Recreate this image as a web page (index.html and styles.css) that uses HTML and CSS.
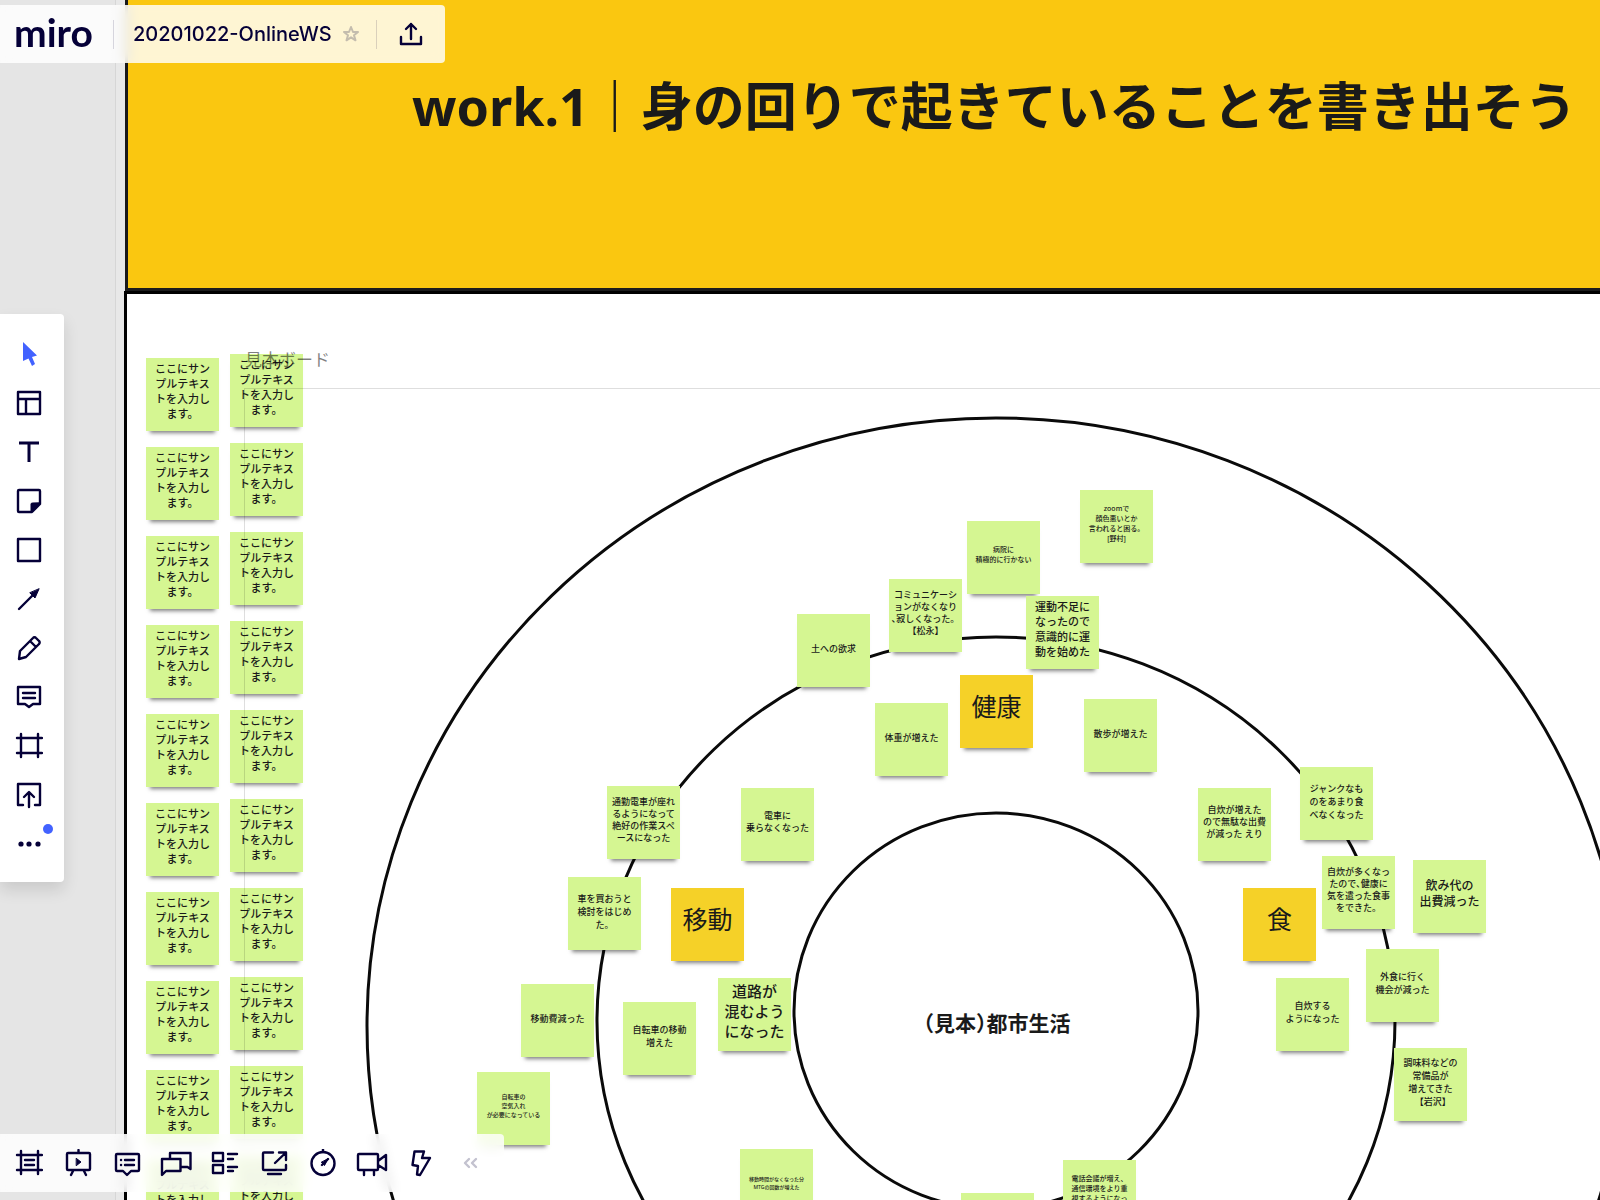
FILE: index.html
```html
<!DOCTYPE html>
<html lang="ja">
<head>
<meta charset="utf-8">
<meta name="viewport" content="width=device-width, initial-scale=1">
<title>20201022-OnlineWS</title>
<link rel="stylesheet" href="styles.css">
</head>
<body>
<main class="board">
  <div class="sheet">
    <section class="banner">
      <h1 class="banner-title">work.1｜身の回りで起きていることを書き出そう</h1>
    </section>
    <section class="workspace">
      <ul class="stack stack-low">
        <li class="note">ここにサン<br>プルテキス<br>トを入力し<br>ます。</li>
        <li class="note">ここにサン<br>プルテキス<br>トを入力し<br>ます。</li>
        <li class="note">ここにサン<br>プルテキス<br>トを入力し<br>ます。</li>
        <li class="note">ここにサン<br>プルテキス<br>トを入力し<br>ます。</li>
        <li class="note">ここにサン<br>プルテキス<br>トを入力し<br>ます。</li>
        <li class="note">ここにサン<br>プルテキス<br>トを入力し<br>ます。</li>
        <li class="note">ここにサン<br>プルテキス<br>トを入力し<br>ます。</li>
        <li class="note">ここにサン<br>プルテキス<br>トを入力し<br>ます。</li>
        <li class="note">ここにサン<br>プルテキス<br>トを入力し<br>ます。</li>
        <li class="note">ここにサン<br>プルテキス<br>トを入力し<br>ます。</li>
      </ul>
      <ul class="stack stack-high">
        <li class="note">ここにサン<br>プルテキス<br>トを入力し<br>ます。</li>
        <li class="note">ここにサン<br>プルテキス<br>トを入力し<br>ます。</li>
        <li class="note">ここにサン<br>プルテキス<br>トを入力し<br>ます。</li>
        <li class="note">ここにサン<br>プルテキス<br>トを入力し<br>ます。</li>
        <li class="note">ここにサン<br>プルテキス<br>トを入力し<br>ます。</li>
        <li class="note">ここにサン<br>プルテキス<br>トを入力し<br>ます。</li>
        <li class="note">ここにサン<br>プルテキス<br>トを入力し<br>ます。</li>
        <li class="note">ここにサン<br>プルテキス<br>トを入力し<br>ます。</li>
        <li class="note">ここにサン<br>プルテキス<br>トを入力し<br>ます。</li>
        <li class="note">ここにサン<br>プルテキス<br>トを入力し<br>ます。</li>
      </ul>

      <div class="frame">
        <h2 class="frame-name">見本ボード</h2>
        <svg class="rings" viewBox="0 0 1400 1260" aria-hidden="true">
          <ellipse cx="751" cy="637" rx="629" ry="608"/>
          <ellipse cx="751" cy="632" rx="399" ry="384"/>
          <ellipse cx="751" cy="622" rx="202" ry="198"/>
        </svg>
        <p class="core">（見本）都市生活</p>

        <div class="note pinned at-zoom t7">zoomで<br>顔色悪いとか<br>言われると困る。<br>[野村]</div>
        <div class="note pinned at-hospital t7">病院に<br>積極的に行かない</div>
        <div class="note pinned at-talk t9 tight">コミュニケーシ<br>ョンがなくなり<br>､寂しくなった。<br>【松永】</div>
        <div class="note pinned at-exercise">運動不足に<br>なったので<br>意識的に運<br>動を始めた</div>
        <div class="note pinned at-soil t9">土への欲求</div>
        <div class="note pinned at-health topic">健康</div>
        <div class="note pinned at-weight t9">体重が増えた</div>
        <div class="note pinned at-walk t9">散歩が増えた</div>
        <div class="note pinned at-commute t9 tight">通勤電車が座れ<br>るようになって<br>絶好の作業スペ<br>ースになった</div>
        <div class="note pinned at-train t9 tight">電車に<br>乗らなくなった</div>
        <div class="note pinned at-car t9">車を買おうと<br>検討をはじめ<br>た。</div>
        <div class="note pinned at-move topic">移動</div>
        <div class="note pinned at-fare t9">移動費減った</div>
        <div class="note pinned at-bike t9">自転車の移動<br>増えた</div>
        <div class="note pinned at-road t15">道路が<br>混むよう<br>になった</div>
        <div class="note pinned at-air t6">自転車の<br>空気入れ<br>が必要になっている</div>
        <div class="note pinned at-cook t9 tight">自炊が増えた<br>ので無駄な出費<br>が減った えり</div>
        <div class="note pinned at-junk t9">ジャンクなも<br>のをあまり食<br>べなくなった</div>
        <div class="note pinned at-meals t9 tight">自炊が多くなっ<br>たので､健康に<br>気を遣った食事<br>をできた。</div>
        <div class="note pinned at-drink t12">飲み代の<br>出費減った</div>
        <div class="note pinned at-food topic">食</div>
        <div class="note pinned at-eatout t9">外食に行く<br>機会が減った</div>
        <div class="note pinned at-self t9">自炊する<br>ようになった</div>
        <div class="note pinned at-season t9">調味料などの<br>常備品が<br>増えてきた<br>　【岩沢】</div>
        <div class="note pinned at-mtg t5">移動時間がなくなった分<br>MTGの回数が増えた</div>
        <div class="note pinned at-call t7">電話会議が増え、<br>通信環境をより重<br>視するようになっ<br>た。</div>
        <div class="note pinned at-blank"></div>
      </div>
    </section>
  </div>
</main>

<header class="panel topbar">
  <a class="logo" href="#">miro</a>
  <span class="rule"></span>
  <button class="board-name" type="button">20201022-OnlineWS</button>
  <button class="star" type="button" aria-label="お気に入り">
    <svg width="18" height="18" viewBox="0 0 18 18"><path d="M9 2l2 5h5l-4 3.300 1.500 5L9 12.300 4.500 15.300l1.500-5L2 7h5z"/></svg>
  </button>
  <span class="rule"></span>
  <button class="share" type="button" aria-label="エクスポート">
    <svg width="24" height="24" viewBox="0 0 24 24"><path d="M2 15v7h20v-7M12 17V2M7 7l5-5 5 5"/></svg>
  </button>
</header>

<nav class="tools" aria-label="ツール">
  <button type="button" aria-label="選択"><svg class="select" viewBox="0 0 28 28"><path d="M8 2l14 13.500-5 1.500 3 7-3 2-3.500-7.500L8 21z"/></svg></button>
  <button type="button" aria-label="テンプレート"><svg viewBox="0 0 28 28"><path d="M3 3h22v22H3zM3 10h22M11 10v15"/></svg></button>
  <button type="button" aria-label="テキスト"><svg viewBox="0 0 28 28"><path class="thick" d="M4 5h20M14 5v19"/></svg></button>
  <button type="button" aria-label="付箋"><svg viewBox="0 0 28 28"><path d="M4 3h20a1 1 0 0 1 1 1v13l-8 8H4a1 1 0 0 1-1-1V4a1 1 0 0 1 1-1z"/><path class="solid" d="M25 16l-9 9v-8a1 1 0 0 1 1-1z"/></svg></button>
  <button type="button" aria-label="図形"><svg viewBox="0 0 28 28"><path d="M3 3h22v22H3z"/></svg></button>
  <button type="button" aria-label="線"><svg viewBox="0 0 28 28"><path d="M4 24L20 8"/><path class="solid" d="M24 4l-4 9-5-5z"/></svg></button>
  <button type="button" aria-label="ペン"><svg viewBox="0 0 28 28"><path d="M4 25l1-8L18 4a2 2 0 0 1 3 0l3 3a2 2 0 0 1 0 3L11 23zM15 7l6 6"/></svg></button>
  <button type="button" aria-label="コメント"><svg viewBox="0 0 28 28"><path d="M3 4h22v17h-7l-4 3-4-3H3zM8 10h12M8 15h12"/></svg></button>
  <button type="button" aria-label="フレーム"><svg viewBox="0 0 28 28"><path d="M2 6h25M2 21h25M6 2v23M23 2v23"/></svg></button>
  <button type="button" aria-label="アップロード"><svg viewBox="0 0 28 28"><path d="M8 24H3V3h22v21h-5M14 26V12M9 16l5-5 5 5"/></svg></button>
  <button class="more" type="button" aria-label="その他"><svg viewBox="0 0 28 28"><g class="dots"><circle cx="6" cy="14" r="2.600"/><circle cx="14" cy="14" r="2.600"/><circle cx="23" cy="14" r="2.600"/></g></svg><span class="badge"></span></button>
</nav>

<footer class="panel dock">
  <button type="button" aria-label="フレーム一覧"><svg viewBox="0 0 28 28"><path d="M2 6h25M2 21h25M6 2v23M23 2v23M10 11h9M10 16h9"/></svg></button>
  <button type="button" aria-label="プレゼン"><svg viewBox="0 0 28 28"><path d="M4 4h21a1 1 0 0 1 1 1v15a1 1 0 0 1-1 1H4a1 1 0 0 1-1-1V5a1 1 0 0 1 1-1zM14.500 1v3M9 22l-2 4M20 22l2 4"/><path class="solid" d="M12.500 9.500l4.500 3.500-4.500 3.500z"/></svg></button>
  <button type="button" aria-label="コメント一覧"><svg viewBox="0 0 28 28"><path d="M4 5h21a1 1 0 0 1 1 1v15a1 1 0 0 1-1 1h-7l-4 4-4-4H4a1 1 0 0 1-1-1V6a1 1 0 0 1 1-1zM8 11h.1M12 11h9M8 16h.1M12 16h9"/></svg></button>
  <button type="button" aria-label="チャット"><svg class="wide" viewBox="0 0 32 28"><path d="M2 26V10h18.500v12H6zM10 10V4h20.500v16l-3-2h-7"/></svg></button>
  <button type="button" aria-label="カード"><svg viewBox="0 0 28 28"><path d="M2 4h10v8H2zM2 16h10v8H2zM17 5h9M17 10h5M17 18h9M17 22h5"/></svg></button>
  <button type="button" aria-label="画面共有"><svg viewBox="0 0 28 28"><path d="M13 3.500H4a1 1 0 0 0-1 1V20a1 1 0 0 0 1 1h21a1 1 0 0 0 1-1v-4M15 14L26 3.500M19 3.500h7V11M8 25h13"/></svg></button>
  <button type="button" aria-label="タイマー"><svg viewBox="0 0 28 28"><circle cx="14" cy="14.500" r="11.500"/><path d="M14 0v3M13 16l6-6"/><path class="solid" d="M19 10l-3.500 6.500-3-3z"/></svg></button>
  <button type="button" aria-label="ビデオ"><svg class="wide" viewBox="0 0 32 28"><path d="M3 5h18a1 1 0 0 1 1 1v14a1 1 0 0 1-1 1H3a1 1 0 0 1-1-1V6a1 1 0 0 1 1-1zM22 12l8-6v15l-8-5M8 22v4M18 22v4"/></svg></button>
  <button type="button" aria-label="アクティビティ"><svg viewBox="0 0 28 28"><path d="M7.500 2.500H17L15 9h8L13 26l-3-.500 1-8.500-5.500-1z"/></svg></button>
  <button class="fold" type="button" aria-label="たたむ"><svg viewBox="0 0 28 28"><path d="M13 10l-4 4 4 4M20 10l-4 4 4 4"/></svg></button>
</footer>
</body>
</html>
```
FILE: styles.css
```css
* {
  box-sizing: border-box;
}

body {
  margin: 0;
  height: 100vh;
  overflow: hidden;
  position: relative;
  color: #1a1a1a;
  font-family: "Noto Sans", "Noto Sans CJK JP", sans-serif;
}

h1, h2, p, ul {
  margin: 0;
  padding: 0;
}

button {
  padding: 0;
  border: 0;
  background: none;
  font: inherit;
  color: inherit;
}

/* Canvas */

.board {
  display: flex;
  height: 100%;
  overflow: hidden;
  padding-left: 115px;
  background: #e5e5e5;
}

.sheet {
  flex: 1;
  min-width: 0;
  display: flex;
  flex-direction: column;
  padding-left: 8px;
  border-left: 1px solid #d6d6d6;
  background: #e8e8e8;
}

.banner {
  flex: none;
  margin-left: 1px;
  padding: 67px 0 144px 284px;
  border-left: 3px solid #1a1a1a;
  border-bottom: 3px solid #1c1c1c;
  background: #fac710;
}

.banner-title {
  font-size: 52px;
  font-weight: 700;
  line-height: 77px;
  white-space: nowrap;
}

.workspace {
  flex: 1;
  min-height: 0;
  position: relative;
  display: flex;
  gap: 11px;
  padding-left: 19px;
  border: solid #000;
  border-width: 3px 0 0 3px;
  background: #fff;
}

.stack {
  display: flex;
  flex-direction: column;
  gap: 16px;
  list-style: none;
}

.stack-low {
  padding-top: 64px;
}

.stack-high {
  padding-top: 60px;
}

/* Sticky notes */

.note {
  flex: none;
  display: grid;
  place-content: center;
  width: 73px;
  height: 73px;
  padding-bottom: 8px;
  background: #d5f692;
  box-shadow: 0 6px 4px -4px rgba(0, 0, 0, 0.5);
  font-size: 11px;
  font-weight: 500;
  line-height: 15px;
  text-align: center;
  white-space: nowrap;
}

.t5 { font-size: 5px; line-height: 8px; }
.t6 { font-size: 6px; line-height: 9px; }
.t7 { font-size: 7px; line-height: 10px; }
.t9 { font-size: 9px; line-height: 13px; }
.t12 { font-size: 12px; line-height: 16px; }
.t15 { font-size: 15px; line-height: 20px; }
.tight { line-height: 12px; }

.t5, .t6, .t7, .t9, .t12 {
  padding-bottom: 5px;
}

.topic {
  padding-bottom: 12px;
  background: #f5d128;
  font-size: 25px;
  font-weight: 400;
  line-height: 36px;
}

/* Sample frame */

.frame {
  position: absolute;
  inset: 94px 0 0 117px;
  border: solid rgba(0, 0, 0, 0.13);
  border-width: 1px 0 0 1px;
}

.frame-name {
  position: absolute;
  left: 0;
  bottom: 100%;
  padding-bottom: 17px;
  color: rgba(0, 0, 0, 0.5);
  font-size: 17px;
  font-weight: 400;
  line-height: 24px;
}

.rings {
  position: absolute;
  left: 0;
  top: 0;
  width: 1400px;
  height: 1260px;
  fill: none;
  stroke: #0a0a0a;
  stroke-width: 3;
}

.core {
  position: absolute;
  left: 602px;
  top: 619px;
  width: 300px;
  text-align: center;
  font-size: 21px;
  font-weight: 700;
  line-height: 30px;
  white-space: nowrap;
  font-feature-settings: "halt";
}

.pinned {
  position: absolute;
}

.at-zoom { left: 835px; top: 101px; }
.at-hospital { left: 722px; top: 132px; }
.at-talk { left: 644px; top: 190px; }
.at-exercise { left: 781px; top: 207px; }
.at-soil { left: 552px; top: 225px; }
.at-health { left: 715px; top: 286px; }
.at-weight { left: 630px; top: 314px; }
.at-walk { left: 839px; top: 310px; }
.at-commute { left: 362px; top: 397px; }
.at-train { left: 496px; top: 399px; }
.at-car { left: 323px; top: 488px; }
.at-move { left: 426px; top: 499px; }
.at-fare { left: 276px; top: 595px; }
.at-bike { left: 378px; top: 613px; }
.at-road { left: 473px; top: 589px; }
.at-air { left: 232px; top: 683px; }
.at-cook { left: 953px; top: 399px; }
.at-junk { left: 1055px; top: 378px; }
.at-meals { left: 1077px; top: 467px; }
.at-drink { left: 1168px; top: 471px; }
.at-food { left: 998px; top: 499px; }
.at-eatout { left: 1121px; top: 560px; }
.at-self { left: 1031px; top: 589px; }
.at-season { left: 1149px; top: 659px; }
.at-mtg { left: 495px; top: 760px; }
.at-call { left: 818px; top: 771px; }
.at-blank { left: 716px; top: 804px; }

/* Floating panels */

.panel {
  position: absolute;
  left: 0;
  display: flex;
  align-items: center;
  height: 58px;
  border-radius: 0 4px 4px 0;
  background: rgba(255, 255, 255, 0.82);
  backdrop-filter: blur(6px);
  color: #050038;
}

svg {
  display: block;
  fill: none;
  stroke: currentColor;
  stroke-width: 2.4;
  stroke-linejoin: round;
  stroke-linecap: round;
}

.topbar {
  top: 5px;
  padding: 0 22px 0 14px;
}

.logo {
  width: 99px;
  padding-bottom: 5px;
  color: inherit;
  font-family: Lato, sans-serif;
  font-size: 39px;
  font-weight: 700;
  line-height: 48px;
  text-decoration: none;
}

.rule {
  width: 1px;
  height: 29px;
  background: rgba(5, 0, 56, 0.15);
}

.board-name {
  margin-left: 19px;
  font-family: Inter, sans-serif;
  font-size: 20px;
  font-weight: 500;
}

.star {
  margin: 0 16px 0 10px;
  color: #c4bdae;
}

.star svg {
  stroke-width: 2;
}

.share {
  margin-left: 22px;
}

.tools {
  position: absolute;
  left: 0;
  top: 314px;
  display: flex;
  flex-direction: column;
  width: 64px;
  padding: 15px 0 14px;
  border-radius: 0 4px 4px 0;
  background: #fff;
  box-shadow: 0 8px 16px rgba(0, 0, 0, 0.12);
  color: #050038;
}

.tools button,
.dock button {
  display: flex;
  align-items: center;
  justify-content: center;
  width: 49px;
  height: 49px;
}

.tools button {
  margin-left: 4px;
}

.tools svg,
.dock svg {
  width: 28px;
  height: 28px;
}

.dock .wide {
  width: 32px;
}

.tools .select {
  fill: #4262ff;
  stroke: none;
}

.thick {
  stroke-width: 3;
  stroke-linecap: butt;
}

.solid {
  fill: currentColor;
  stroke-width: 1;
}

.dots {
  fill: currentColor;
  stroke: none;
}

.more {
  position: relative;
}

.badge {
  position: absolute;
  right: 0;
  top: 5px;
  width: 10px;
  height: 10px;
  border-radius: 50%;
  background: #4262ff;
}

.dock {
  bottom: 8px;
  padding: 0 10px 0 4px;
}

.dock .fold {
  color: #c3c2cf;
}
```
